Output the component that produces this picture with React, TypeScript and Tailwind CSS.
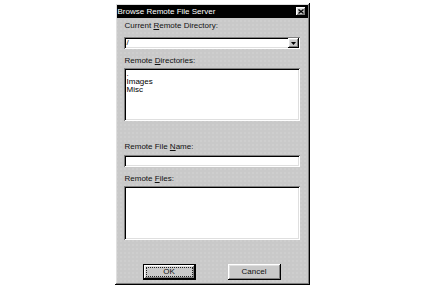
import React from "react";

const raised =
  "shadow-[inset_-1px_-1px_#000,inset_1px_1px_#fff,inset_-2px_-2px_#808080,inset_2px_2px_#dfdfdf]";
const sunken =
  "shadow-[inset_1px_1px_#808080,inset_-1px_-1px_#fff,inset_2px_2px_#000,inset_-2px_-2px_#dfdfdf]";

function Label({ pre, hot, post }: { pre: string; hot: string; post: string }) {
  return (
    <div className="h-[10px] pl-[1px] text-[8px] leading-[10px] text-[#111]">
      {pre}
      <span className="underline underline-offset-1">{hot}</span>
      {post}
    </div>
  );
}

function Button({ label, primary }: { label: string; primary?: boolean }) {
  if (primary) {
    return (
      <div className="h-[16px] w-[53px] border border-black">
        <div className={`h-full w-full p-[2px] bg-[#c9c9c9] ${raised}`}>
          <div className="flex h-full w-full items-center justify-center border border-dotted border-[#222] text-[8px] leading-none text-[#111]">
            {label}
          </div>
        </div>
      </div>
    );
  }
  return (
    <div
      className={`flex h-[16px] w-[53px] items-center justify-center bg-[#c9c9c9] text-[8px] leading-none text-[#111] ${raised}`}
    >
      {label}
    </div>
  );
}

export default function App() {
  return (
    <div className="flex h-[292px] w-[424px] justify-center bg-white pt-[3px] font-['Liberation_Sans',Arial,sans-serif]">
      <div
        className={`flex h-[282px] w-[195px] flex-col bg-[#c9c9c9] bg-[image:radial-gradient(circle,#d3d3d3_0.6px,transparent_0.8px)] bg-[size:4px_4px] p-[2px] ${raised}`}
      >
        <div className="flex h-[13px] items-center justify-between bg-black pl-[1px] pr-[2px]">
          <span className="text-[8px] leading-none text-white">Browse Remote File Server</span>
          <div className={`flex h-[9px] w-[10px] items-center justify-center bg-[#c9c9c9] ${raised}`}>
            <svg width="6" height="5" viewBox="0 0 6 5">
              <path d="M0.5 0.5 L5.5 4.5 M5.5 0.5 L0.5 4.5" stroke="#000" strokeWidth="1.3" />
            </svg>
          </div>
        </div>

        <div className="flex flex-col pl-[7px] pr-[8px]">
          <div className="mt-[3px]">
            <Label pre="Current " hot="R" post="emote Directory:" />
          </div>
          <div className={`mt-[6px] flex h-[12px] items-center bg-white pl-[2px] pr-[1px] ${sunken}`}>
            <span className="flex-1 pl-[1px] text-[8px] leading-none text-[#111]">/</span>
            <div className={`flex h-[10px] w-[11px] items-center justify-center bg-[#c9c9c9] ${raised}`}>
              <svg width="5" height="3" viewBox="0 0 5 3">
                <path d="M0 0 H5 L2.5 3 Z" fill="#000" />
              </svg>
            </div>
          </div>

          <div className="mt-[7px]">
            <Label pre="Remote " hot="D" post="irectories:" />
          </div>
          <div className={`mt-[2px] h-[53px] bg-white px-[3px] pt-[2px] text-[8px] leading-[8px] text-black ${sunken}`}>
            <div>.</div>
            <div>Images</div>
            <div>Misc</div>
          </div>

          <div className="mt-[21px]">
            <Label pre="Remote File " hot="N" post="ame:" />
          </div>
          <div className={`mt-[3px] h-[12px] bg-white ${sunken}`} />

          <div className="mt-[7px]">
            <Label pre="Remote " hot="F" post="iles:" />
          </div>
          <div className={`mt-[2px] h-[54px] bg-white ${sunken}`} />

          <div className="mt-[24px] flex gap-[32px] pl-[19px]">
            <Button label="OK" primary />
            <Button label="Cancel" />
          </div>
        </div>
      </div>
    </div>
  );
}
